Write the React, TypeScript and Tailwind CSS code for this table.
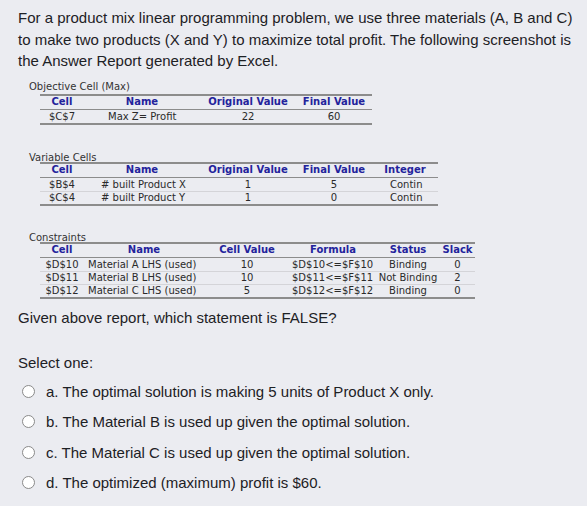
const report = "font-['DejaVu_Sans',Verdana,sans-serif] text-[10px] text-[#2a2a2a]";
const head = "font-bold text-[#23239c]";

type Col = { w: string; align: string };

function Table({ cols, header, rows, width }: { cols: Col[]; header: string[]; rows: string[][]; width: string }) {
  return (
    <div className={`${width} ml-[22px] border-y-2 border-[#8c8c8c]`}>
      <div className="flex h-[14px] items-center border-b border-[#8c8c8c] leading-[14px]">
        {header.map((h, i) => (
          <div key={h} className={`${cols[i].w} text-center ${head}`}>
            {h}
          </div>
        ))}
      </div>
      {rows.map((r, ri) => (
        <div
          key={ri}
          className={`flex h-[13px] items-center leading-[13px] ${ri > 0 ? "border-t border-[#d4d4d8]" : ""}`}
        >
          {r.map((c, i) => (
            <div key={i} className={`${cols[i].w} ${cols[i].align} whitespace-nowrap`}>
              {c}
            </div>
          ))}
        </div>
      ))}
    </div>
  );
}

const options = [
  "a. The optimal solution is making 5 units of Product X only.",
  "b. The Material B is used up given the optimal solution.",
  "c. The Material C is used up given the optimal solution.",
  "d. The optimized (maximum) profit is $60.",
];

export default function App() {
  return (
    <div className="h-[506px] w-[587px] overflow-hidden bg-[#ebecf1] font-['Liberation_Sans',Arial,sans-serif] text-[15px] leading-[21.5px] text-[#1d2125]">
      <div className="pl-[18px] pr-[10px] pt-[7px]">
        <p>
          For a product mix linear programming problem, we use three materials (A, B and C) to make two products (X and
          Y) to maximize total profit. The following screenshot is the Answer Report generated by Excel.
        </p>

        <div className={`mt-[9px] ${report}`}>
          <div className="ml-[11px] h-[13px] leading-[12px] text-[#333]">Objective Cell (Max)</div>
          <Table
            width="w-[332px]"
            cols={[
              { w: "w-[44px]", align: "text-center" },
              { w: "w-[116px]", align: "text-left pl-[24px]" },
              { w: "w-[96px]", align: "text-center" },
              { w: "w-[76px]", align: "text-center" },
            ]}
            header={["Cell", "Name", "Original Value", "Final Value"]}
            rows={[["$C$7", "Max Z= Profit", "22", "60"]]}
          />

          <div className="ml-[11px] mt-[27px] h-[10px] leading-[12px] text-[#333]">Variable Cells</div>
          <Table
            width="w-[398px]"
            cols={[
              { w: "w-[44px]", align: "text-center" },
              { w: "w-[116px]", align: "text-left pl-[17px]" },
              { w: "w-[96px]", align: "text-center" },
              { w: "w-[76px]", align: "text-center" },
              { w: "w-[66px]", align: "text-left pl-[18px]" },
            ]}
            header={["Cell", "Name", "Original Value", "Final Value", "Integer"]}
            rows={[
              ["$B$4", "# built Product X", "1", "5", "Contin"],
              ["$C$4", "# built Product Y", "1", "0", "Contin"],
            ]}
          />

          <div className="ml-[11px] mt-[26px] h-[10px] leading-[12px] text-[#333]">Constraints</div>
          <Table
            width="w-[435px]"
            cols={[
              { w: "w-[44px]", align: "text-center" },
              { w: "w-[120px]", align: "text-left pl-[4px]" },
              { w: "w-[86px]", align: "text-center" },
              { w: "w-[86px]", align: "text-left pl-[2px]" },
              { w: "w-[64px]", align: "text-center" },
              { w: "w-[35px]", align: "text-center" },
            ]}
            header={["Cell", "Name", "Cell Value", "Formula", "Status", "Slack"]}
            rows={[
              ["$D$10", "Material A LHS (used)", "10", "$D$10<=$F$10", "Binding", "0"],
              ["$D$11", "Material B LHS (used)", "10", "$D$11<=$F$11", "Not Binding", "2"],
              ["$D$12", "Material C LHS (used)", "5", "$D$12<=$F$12", "Binding", "0"],
            ]}
          />
        </div>

        <p className="mt-[8px]">Given above report, which statement is FALSE?</p>

        <p className="mt-[24px]">Select one:</p>

        <div className="mt-[7px] flex flex-col gap-[9px]">
          {options.map((o) => (
            <label key={o} className="flex items-center">
              <span className="ml-[4px] mr-[11px] h-[13px] w-[13px] rounded-full border border-[#8a8a8a] bg-white" />
              <span>{o}</span>
            </label>
          ))}
        </div>
      </div>
    </div>
  );
}
